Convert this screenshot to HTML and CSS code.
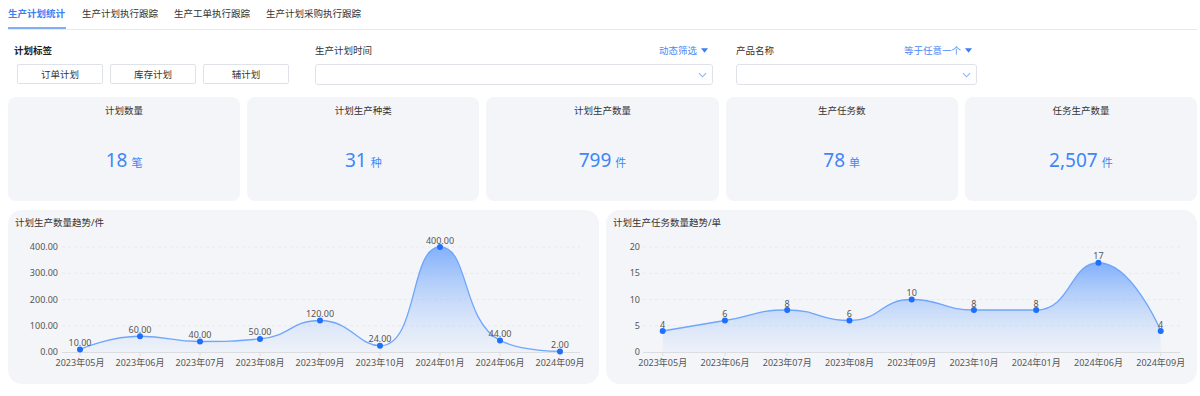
FILE: index.html
```html
<!DOCTYPE html>
<html lang="zh-CN">
<head>
    <meta charset="UTF-8">
    <meta name="viewport" content="width=device-width, initial-scale=1.0">
    <title>生产计划统计</title>
    <link rel="stylesheet" href="styles.css">
</head>
<body>
    <div class="page">
        <div class="tabs">
            <div class="tab active">生产计划统计</div>
            <div class="tab">生产计划执行跟踪</div>
            <div class="tab">生产工单执行跟踪</div>
            <div class="tab">生产计划采购执行跟踪</div>
        </div>

        <div class="filters">
            <div class="filter filter-tags">
                <div class="filter-head">
                    <span class="filter-label strong">计划标签</span>
                </div>
                <div class="tag-buttons">
                    <button class="tag-btn">订单计划</button>
                    <button class="tag-btn">库存计划</button>
                    <button class="tag-btn">辅计划</button>
                </div>
            </div>
            <div class="filter filter-time">
                <div class="filter-head">
                    <span class="filter-label">生产计划时间</span>
                    <span class="filter-mode">动态筛选
                        <svg class="caret" viewBox="0 0 8 5"><path d="M0 0h8L4 5z"/></svg>
                    </span>
                </div>
                <div class="select">
                    <svg class="chevron" viewBox="0 0 10 6"><path d="M1 1l4 4 4-4"/></svg>
                </div>
            </div>
            <div class="filter filter-product">
                <div class="filter-head">
                    <span class="filter-label">产品名称</span>
                    <span class="filter-mode">等于任意一个
                        <svg class="caret" viewBox="0 0 8 5"><path d="M0 0h8L4 5z"/></svg>
                    </span>
                </div>
                <div class="select">
                    <svg class="chevron" viewBox="0 0 10 6"><path d="M1 1l4 4 4-4"/></svg>
                </div>
            </div>
        </div>

        <div class="stats">
            <div class="stat-card">
                <div class="stat-title">计划数量</div>
                <div class="stat-value"><span class="num">18</span><span class="unit">笔</span></div>
            </div>
            <div class="stat-card">
                <div class="stat-title">计划生产种类</div>
                <div class="stat-value"><span class="num">31</span><span class="unit">种</span></div>
            </div>
            <div class="stat-card">
                <div class="stat-title">计划生产数量</div>
                <div class="stat-value"><span class="num">799</span><span class="unit">件</span></div>
            </div>
            <div class="stat-card">
                <div class="stat-title">生产任务数</div>
                <div class="stat-value"><span class="num">78</span><span class="unit">单</span></div>
            </div>
            <div class="stat-card">
                <div class="stat-title">任务生产数量</div>
                <div class="stat-value"><span class="num">2,507</span><span class="unit">件</span></div>
            </div>
        </div>

        <div class="charts">
            <div class="chart-panel">
                <div class="chart-title">计划生产数量趋势/件</div>
                <svg id="planChart" class="chart" width="591" height="154"></svg>
            </div>
            <div class="chart-panel">
                <div class="chart-title">计划生产任务数量趋势/单</div>
                <svg id="taskChart" class="chart" width="591" height="154"></svg>
            </div>
        </div>
    </div>
    <script src="chart.js"></script>
</body>
</html>
```

FILE: styles.css
```css
* {
    margin: 0;
    padding: 0;
    box-sizing: border-box;
    font-family: 'Noto Sans', 'Noto Sans CJK SC', sans-serif;
}
body {
    background: #fff;
    color: #333;
    font-size: 9.5px;
}
.page {
    width: 1189px;
    margin-left: 8px;
}

/* tabs */
.tabs {
    display: flex;
    gap: 16px;
    border-bottom: 1px solid #e6e9ef;
}
.tab {
    padding: 7px 0 6px;
    line-height: 14px;
    color: #333;
    border-bottom: 2px solid transparent;
}
.tab.active {
    color: #3a7ff5;
    font-weight: 600;
    border-bottom-color: #82aef5;
    padding-right: 1px;
}

/* filters */
.filters {
    display: grid;
    grid-template-columns: 276px 398px 239px;
    column-gap: 25px;
    padding-left: 6px;
    margin-top: 14px;
}
.filter-product {
    margin-left: -2px;
}
.filter-head {
    display: flex;
    justify-content: space-between;
    align-items: center;
    line-height: 13px;
    height: 13px;
    margin-bottom: 7px;
    padding-right: 5px;
}
.filter-label.strong {
    font-weight: 700;
    color: #222;
}
.filter-mode {
    color: #4a8af5;
    display: flex;
    align-items: center;
    gap: 4px;
}
.caret {
    width: 7px;
    height: 5px;
    fill: #3a7ff5;
}
.tag-buttons {
    display: flex;
    gap: 7px;
    padding-left: 3px;
}
.tag-btn {
    width: 86px;
    height: 20px;
    border: 1px solid #dfe2e8;
    border-radius: 2px;
    background: #fff;
    color: #333;
    font-size: 9.5px;
}
.select {
    height: 21px;
    border: 1px solid #dfe2e8;
    border-radius: 3px;
    display: flex;
    justify-content: flex-end;
    align-items: center;
    padding-right: 5px;
}
.chevron {
    width: 9px;
    height: 6px;
    fill: none;
    stroke: #8ab3f3;
    stroke-width: 1.2;
}

/* stat cards */
.stats {
    display: grid;
    grid-template-columns: repeat(5, 1fr);
    gap: 7px;
    margin-top: 12px;
}
.stat-card {
    background: #f4f5f8;
    border-radius: 8px;
    height: 104px;
    display: flex;
    flex-direction: column;
    padding-top: 7px;
}
.stat-title {
    text-align: center;
    line-height: 14px;
    color: #333;
}
.stat-value {
    flex: 1;
    display: flex;
    justify-content: center;
    align-items: center;
    gap: 4px;
    color: #3f86f6;
}
.stat-value .num {
    font-size: 19px;
    line-height: 22px;
}
.stat-value .unit {
    font-size: 11px;
    padding-top: 5px;
}

/* charts */
.charts {
    display: grid;
    grid-template-columns: 591px 591px;
    gap: 7px;
    margin-top: 9px;
}
.chart-panel {
    background: #f4f5f8;
    border-radius: 14px;
    height: 174px;
    padding-top: 6px;
    overflow: hidden;
}
.chart-title {
    line-height: 14px;
    padding-left: 7px;
    color: #333;
}
.chart {
    display: block;
}
.chart text {
    font-size: 9px;
    fill: #555;
}
.chart .grid-line {
    stroke: #e8e9ec;
    stroke-dasharray: 3 3;
}
.chart .axis-line {
    stroke: #dcdde1;
}
.chart .series-line {
    fill: none;
    stroke: #6fa6fb;
    stroke-width: 1.3;
}
.chart .dot {
    fill: #1f6ffa;
}
```

FILE: chart.js
```javascript
const NS = 'http://www.w3.org/2000/svg';

const months = ['2023年05月', '2023年06月', '2023年07月', '2023年08月', '2023年09月', '2023年10月', '2024年01月', '2024年06月', '2024年09月'];

const charts = [
    {
        id: 'planChart',
        values: [10, 60, 40, 50, 120, 24, 400, 44, 2],
        max: 400, step: 100, decimals: 2,
        first: 72, gap: 60,
        axisStart: 54, axisEnd: 572, labelRight: 50
    },
    {
        id: 'taskChart',
        values: [4, 6, 8, 6, 10, 8, 8, 17, 4],
        max: 20, step: 5, decimals: 0,
        first: 56.7, gap: 62.25,
        axisStart: 37, axisEnd: 574, labelRight: 34
    }
];

const TOP = 17;
const BOTTOM = 122;

function el(name, attrs, text) {
    const node = document.createElementNS(NS, name);
    for (const k in attrs) node.setAttribute(k, attrs[k]);
    if (text !== undefined) node.textContent = text;
    return node;
}

function clamp(v, a, b) {
    return Math.min(Math.max(v, Math.min(a, b)), Math.max(a, b));
}

// smooth line, control points kept between neighbours (no overshoot)
function smoothPath(pts) {
    const s = 0.5;
    const n = pts.length;
    const cIn = [], cOut = [];
    for (let i = 0; i < n; i++) {
        const p = pts[i];
        if (i === 0 || i === n - 1) {
            cIn[i] = p;
            cOut[i] = p;
            continue;
        }
        const prev = pts[i - 1], next = pts[i + 1];
        let vx = next[0] - prev[0];
        let vy = next[1] - prev[1];
        const lenPrev = Math.hypot(p[0] - prev[0], p[1] - prev[1]);
        const lenNext = Math.hypot(next[0] - p[0], next[1] - p[1]);
        const ratio = lenNext / (lenNext + lenPrev);

        let nx = clamp(p[0] + vx * s * ratio, p[0], next[0]);
        let ny = clamp(p[1] + vy * s * ratio, p[1], next[1]);

        vx = nx - p[0];
        vy = ny - p[1];
        let px = clamp(p[0] - vx * lenPrev / lenNext, prev[0], p[0]);
        let py = clamp(p[1] - vy * lenPrev / lenNext, prev[1], p[1]);

        vx = p[0] - px;
        vy = p[1] - py;
        nx = p[0] + vx * lenNext / lenPrev;
        ny = p[1] + vy * lenNext / lenPrev;

        cIn[i] = [px, py];
        cOut[i] = [nx, ny];
    }
    let d = 'M' + pts[0][0] + ',' + pts[0][1];
    for (let i = 1; i < n; i++) {
        const c1 = cOut[i - 1], c2 = cIn[i], p = pts[i];
        d += ' C' + c1[0].toFixed(2) + ',' + c1[1].toFixed(2) + ' ' +
            c2[0].toFixed(2) + ',' + c2[1].toFixed(2) + ' ' + p[0].toFixed(2) + ',' + p[1].toFixed(2);
    }
    return d;
}

charts.forEach(function(c) {
    const svg = document.getElementById(c.id);
    const yOf = function(v) { return BOTTOM - (v / c.max) * (BOTTOM - TOP); };

    const defs = el('defs', {});
    const grad = el('linearGradient', { id: c.id + 'Fill', x1: 0, y1: 0, x2: 0, y2: 1 });
    grad.appendChild(el('stop', { offset: '0', 'stop-color': '#6ea4fb', 'stop-opacity': '0.85' }));
    grad.appendChild(el('stop', { offset: '1', 'stop-color': '#b9d3fb', 'stop-opacity': '0.12' }));
    defs.appendChild(grad);
    svg.appendChild(defs);

    // y axis labels and grid
    for (let v = 0; v <= c.max; v += c.step) {
        const y = yOf(v);
        if (v > 0) {
            svg.appendChild(el('line', { class: 'grid-line', x1: c.axisStart, x2: c.axisEnd, y1: y, y2: y }));
        }
        svg.appendChild(el('text', { x: c.labelRight, y: y + 3, 'text-anchor': 'end' }, v.toFixed(c.decimals)));
    }

    const pts = c.values.map(function(v, i) { return [c.first + c.gap * i, yOf(v)]; });
    const line = smoothPath(pts);
    const last = pts[pts.length - 1];

    svg.appendChild(el('path', {
        d: line + ' L' + last[0] + ',' + BOTTOM + ' L' + pts[0][0] + ',' + BOTTOM + ' Z',
        fill: 'url(#' + c.id + 'Fill)'
    }));
    svg.appendChild(el('line', { class: 'axis-line', x1: c.axisStart, x2: c.axisEnd, y1: BOTTOM + 0.5, y2: BOTTOM + 0.5 }));
    svg.appendChild(el('path', { class: 'series-line', d: line }));

    pts.forEach(function(p, i) {
        svg.appendChild(el('line', { class: 'axis-line', x1: p[0], x2: p[0], y1: BOTTOM, y2: BOTTOM + 4 }));
        svg.appendChild(el('text', { x: p[0], y: BOTTOM + 14, 'text-anchor': 'middle' }, months[i]));
        svg.appendChild(el('circle', { class: 'dot', cx: p[0], cy: p[1], r: 3 }));
        svg.appendChild(el('text', { x: p[0], y: p[1] - 3.5, 'text-anchor': 'middle' }, c.values[i].toFixed(c.decimals)));
    });
});
```
